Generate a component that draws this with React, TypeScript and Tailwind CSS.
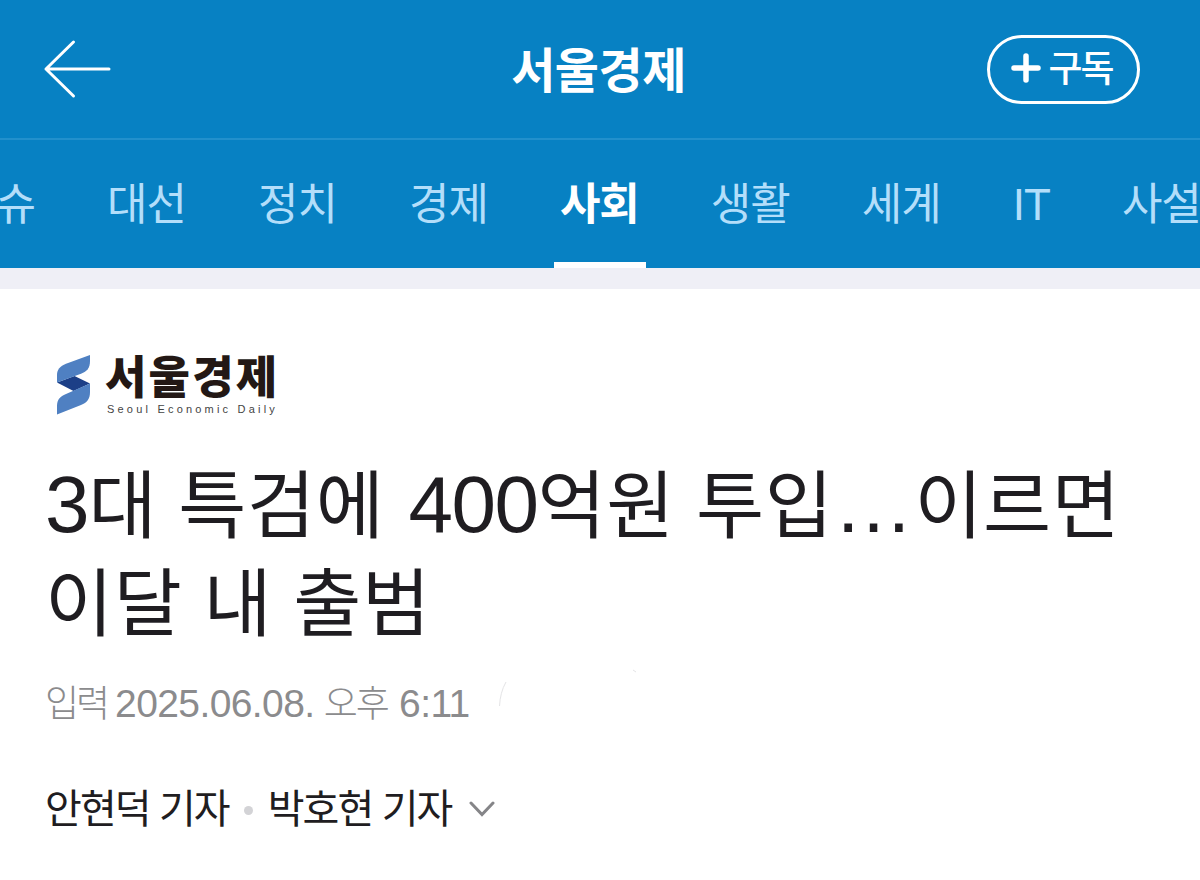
const tabs = ['이슈', '대선', '정치', '경제', '사회', '생활', '세계', 'IT', '사설'];
const active = '사회';

function BackArrow() {
  return (
    <svg className="w-[70px] h-[62px]" viewBox="0 0 70 62" fill="none" stroke="#fff" strokeWidth="3" strokeLinecap="round" strokeLinejoin="round">
      <path d="M67 31H4M31.500 4L4 31L31.500 58" />
    </svg>
  );
}

function LogoMark() {
  return (
    <svg className="w-[35px] h-[62px]" viewBox="0 0 35 62">
      <path d="M1 28.500L18.500 22L34 29.500L17.500 37Z" fill="#1c3f87" />
      <path d="M34 1V7C34 14 31 17.500 25 19.800L1 28.500V21C1 15.500 4 12 10 9.700Z" fill="#4f80c2" />
      <path d="M34 29.500V38C34 45 31 48.500 25 51L1 60.500V52C1 45.500 4 42.500 10 40Z" fill="#4f80c2" />
    </svg>
  );
}

export default function App() {
  return (
    <div className="w-[1200px] h-[880px] overflow-hidden bg-white font-['Liberation_Sans','Noto_Sans_CJK_KR',sans-serif]">
      <header className="bg-[#0781c3] text-white">
        <div className="h-[140px] flex items-center justify-between pl-[42px] pr-[60px] border-b-2 border-[#2290cc]">
          <div className="w-[168px]">
            <BackArrow />
          </div>
          <h1 className="pt-[6px] text-[48px] leading-none font-bold tracking-[-0.5px]">서울경제</h1>
          <button className="w-[153px] h-[69px] rounded-full border-3 border-white flex items-center justify-center gap-[7px] pr-[3px]">
            <svg className="w-[30px] h-[30px] -mt-[2px]" viewBox="0 0 30 30" stroke="#fff" strokeWidth="5.500" strokeLinecap="round">
              <path d="M3 15H27M15 3V27" />
            </svg>
            <span className="text-[37px] leading-none font-medium tracking-[-2px]">구독</span>
          </button>
        </div>
        <nav className="h-[128px] flex gap-[72px] -ml-[44px] whitespace-nowrap">
          {tabs.map(tab => (
            <div key={tab} className={tab === active ? 'relative shrink-0 flex items-center font-bold' : 'shrink-0 flex items-center text-[#b3defa]'}>
              <span className="pt-[2px] text-[44px] leading-none tracking-[-1px]">{tab}</span>
              {tab === active && <span className="absolute bottom-0 -left-[6px] w-[92px] h-[6px] bg-white" />}
            </div>
          ))}
        </nav>
      </header>
      <div className="h-[21px] bg-[#efeff6]" />

      <main className="pl-[45px] text-[#1f1d21]">
        <div className="flex pt-[65px] pl-[11px] gap-[14px]">
          <LogoMark />
          <div className="w-[180px] text-[#231815]">
            <div className="pt-px text-[45px] leading-[47px] font-black tracking-[2.200px]">서울경제</div>
            <div className="pl-[2px] text-[11px] leading-[14px] tracking-[3.200px] whitespace-nowrap text-[#444]">Seoul Economic Daily</div>
          </div>
        </div>

        <h2 className="mt-[42px] text-[74px] leading-[98px] tracking-[0.6px] whitespace-nowrap">
          <span className="text-[80px] leading-none tracking-[-1px]">3</span>대 특검에{' '}
          <span className="ml-[3px] text-[80px] leading-none tracking-[-1.500px]">400</span>억원 투입
          <span className="text-[80px] leading-none tracking-[1px]">…</span>이르면
          <br />
          이달 내 출범
        </h2>

        <p className="relative mt-[25px] text-[39px] leading-[50px] tracking-[-0.6px] text-[#8b8b8d] whitespace-nowrap">
          <span className="text-[37px] font-light tracking-[-3px] mr-[-1px]">입력</span>
          <span className="ml-[9px]">2025.06.08. </span>
          <span className="-ml-px text-[37px] font-light tracking-[-2px]">오후</span>
          <span className="ml-px"> 6:11</span>
          <svg className="absolute left-[452px] -top-[11px] w-[142px] h-[42px]" viewBox="0 0 142 42" fill="none" stroke="#e4e4e6">
            <path d="M9 14C5 21 3 29 2.500 38" />
            <path d="M136 2L139 4" />
          </svg>
        </p>

        <div className="mt-[54px] flex items-center text-[40px] leading-[50px] tracking-[-1.900px] whitespace-nowrap">
          <span>안현덕 기자</span>
          <span className="mx-[15px] mt-0.5 size-[9px] rounded-full bg-[#d3d3d6]" />
          <span>박호현 기자</span>
          <svg className="ml-[18px] w-[26px] h-[16px]" viewBox="0 0 26 16" fill="none" stroke="#858588" strokeWidth="3" strokeLinecap="round">
            <path d="M2 2L13 13.500L24 2" />
          </svg>
        </div>
      </main>
    </div>
  );
}
